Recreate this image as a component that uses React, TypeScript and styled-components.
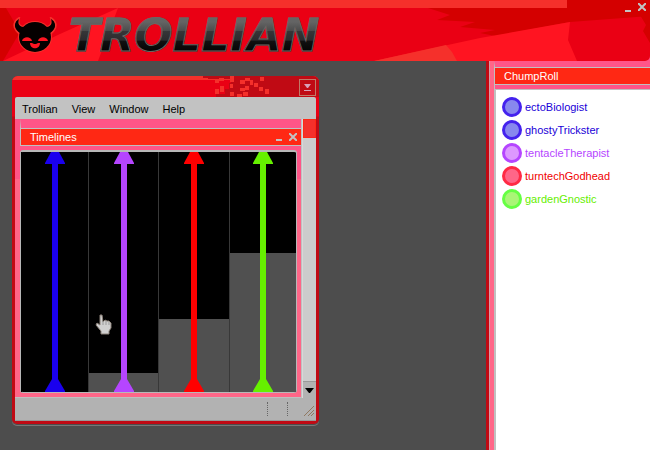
import React from "react";
import styled, { createGlobalStyle } from "styled-components";

const Global = createGlobalStyle`
  * { box-sizing: border-box; }
  body { margin: 0; background: #4d4d4d; font: 11px/16px "Liberation Sans", Arial, sans-serif; }
  button { font: inherit; color: inherit; background: none; border: 0; padding: 0; cursor: pointer; }
`;

const Page = styled.div`
  min-height: 100vh;
  display: flex;
  flex-direction: column;
  background: #4d4d4d;
`;

const Banner = styled.header`
  position: relative;
  display: flex;
  justify-content: space-between;
  align-items: flex-start;
  height: 61px;
  background: #ff5588;
`;

const BannerArt = styled.svg`
  position: absolute;
  inset: 0;
  width: 100%;
  height: 100%;
  border-radius: 0 0 5px 0;
`;

const Brand = styled.div`
  position: relative;
  display: flex;
  align-items: center;
  gap: 12px;
  padding: 9px 0 0 13px;
`;

const Wordmark = styled.h1`
  margin: 0;
  padding-right: 8px;
  font: italic bold 45px/54px "DejaVu Sans", Verdana, sans-serif;
  color: transparent;
  background: linear-gradient(#646464 24%, #4c4c4c 40%, #363638 41%, #2b2b2d 58%, #111 59%, #000 85%);
  background-clip: text;
  -webkit-background-clip: text;
  -webkit-text-stroke: 1px #6c6562;
`;

const Controls = styled.div`
  position: relative;
  display: flex;
  align-items: center;
  gap: 4px;
`;

const BannerControls = styled(Controls)`
  padding: 2px 3px 0 0;
`;

const IconButton = styled.button`
  display: grid;
  place-items: center;
  width: 10px;
  height: 10px;
`;

const Workspace = styled.div`
  flex: 1;
  display: grid;
  grid-template-columns: minmax(0, 1fr) 164px;
`;

const Desktop = styled.main`
  padding: 15px 12px;
`;

const Window = styled.section`
  display: flex;
  flex-direction: column;
  max-width: 307px;
  padding: 0 3px 3px;
  border-radius: 6px 6px 5px 5px;
  background: linear-gradient(#ea0014 40px, #c00a14 41px);
  box-shadow: 0 1px 0 #4d4d4d, 0 2px 0 #777;
`;

const WindowTitle = styled.header`
  position: relative;
  display: flex;
  justify-content: flex-end;
  align-items: center;
  height: 21px;
  margin: 0 -3px;
  padding: 1px 3px 0 0;
  border-radius: 6px 6px 0 0;
  overflow: hidden;
  background: linear-gradient(#f5302b 4px, #ea0014 4px);
`;

const TitleArt = styled.svg`
  position: absolute;
  top: 0;
  right: 0;
`;

const Collapse = styled.button`
  position: relative;
  display: grid;
  place-items: center;
  width: 17px;
  height: 17px;
  && { border: 1px solid #c07a68; }
`;

const MenuBar = styled.nav`
  display: flex;
  align-items: center;
  gap: 14px;
  height: 22px;
  padding: 2px 7px 0;
  border-radius: 2px 2px 0 0;
  background: #c2c2c2;
  color: #000;
`;

const Body = styled.div`
  display: grid;
  grid-template-columns: minmax(0, 1fr) 14px;
`;

const Pane = styled.section`
  min-width: 0;
  padding: 0 0 4px 5px;
  border-right: 1px solid #c0c0c0;
  border-bottom: 1px solid #c0c0c0;
  background: linear-gradient(#ff5588 60px, #ff6688 60px);
`;

const PaneTitle = styled.header`
  display: flex;
  justify-content: space-between;
  align-items: center;
  height: 27px;
  padding: 0 3px 0 9px;
  border: solid #c0c0c0;
  border-width: 1px 0 1px 1px;
  border-top: 9px solid #ff5588;
  box-shadow: inset 0 1px 0 #c0c0c0;
  background: #ff2814;
  color: #fff;
`;

const Heading = styled.h2`
  margin: 0;
  padding-top: 1px;
  font-size: 11px;
  font-weight: normal;
`;

const Chart = styled.div`
  display: grid;
  grid-template-columns: 67fr 70fr 70fr 67fr;
  height: 243px;
  margin: 4px 4px 0 0;
  border: solid #b8b8b8;
  border-width: 2px 1px 1px;
  border-radius: 3px;
  background: #000;
`;

const Lane = styled.div`
  display: grid;
  height: 240px;
  border-left: 1px solid #383838;
  &:first-child { border-left-color: #000; }
  > * { grid-area: 1 / 1; }
`;

const Level = styled.div`
  align-self: end;
  background: #505050;
`;

const Arrow = styled.div<{ $color: string }>`
  display: flex;
  flex-direction: column;
  align-items: center;
  color: ${(p) => p.$color};
  svg { display: block; fill: currentColor; }
`;

const Stem = styled.div`
  flex: 1;
  width: 6px;
  background: currentColor;
`;

const ScrollBar = styled.div`
  display: flex;
  flex-direction: column;
  border-left: 1px solid #d8d8d8;
  background: #cccccc;
`;

const Thumb = styled.div`
  height: 19px;
  border: 1px solid #ff2814;
  background: #f5302b;
`;

const ScrollDown = styled.button`
  display: grid;
  place-items: center;
  height: 17px;
  margin-top: auto;
  && { border-top: 1px solid #999; background: #b2b2b2; }
`;

const StatusBar = styled.footer`
  display: flex;
  justify-content: flex-end;
  align-items: center;
  gap: 15px;
  height: 23px;
  padding: 0 1px 0 0;
  border-bottom: 1px solid #999;
  background: #b2b2b2;
`;

const Cell = styled.span`
  width: 21px;
  height: 14px;
  border: dotted #666;
  border-width: 0 1px;
`;

const Grip = styled.svg`
  align-self: flex-end;
  margin-bottom: 3px;
`;

const Sidebar = styled.aside`
  display: flex;
  flex-direction: column;
  padding-left: 5px;
  border-left: 3px solid #c00a14;
  background: #ff6688;
  box-shadow: inset 1px 0 0 #d0a0a8;
`;

const RollTitle = styled(PaneTitle)`
  height: 24px;
  border-top-width: 6px;
`;

const Roll = styled.ul`
  flex: 1;
  display: flex;
  flex-direction: column;
  gap: 3px;
  margin: 0;
  padding: 7px 6px;
  list-style: none;
  border: solid #c0c0c0;
  border-width: 1px 0 0 2px;
  background: #fff;
`;

const RollGap = styled.div`
  height: 4px;
  border-left: 1px solid #c0c0c0;
  background: #ff5588;
`;

const Chum = styled.li<{ $text: string }>`
  display: flex;
  align-items: center;
  gap: 3px;
  height: 20px;
  color: ${(p) => p.$text};
`;

const Mood = styled.span<{ $ring: string; $fill: string }>`
  width: 20px;
  height: 20px;
  border: 3px solid ${(p) => p.$ring};
  border-radius: 50%;
  background: ${(p) => p.$fill};
`;

const chums = [
  { name: "ectoBiologist", text: "#1a00d8", ring: "#4422ee", fill: "#8888ee" },
  { name: "ghostyTrickster", text: "#1a00d8", ring: "#4422ee", fill: "#8888ee" },
  { name: "tentacleTherapist", text: "#b545ff", ring: "#b545ff", fill: "#dd99ff" },
  { name: "turntechGodhead", text: "#f00000", ring: "#ff2a44", fill: "#ff6688" },
  { name: "gardenGnostic", text: "#66ee00", ring: "#66ff44", fill: "#aaf577" },
];

const lanes = [
  { color: "#1a00ee", level: 0 },
  { color: "#b545ff", level: 8 },
  { color: "#ff0000", level: 30.5 },
  { color: "#66f000", level: 58 },
];

const pixels = [
  [16, 3, 4, 4], [20, 2, 5, 3], [31, 0, 4, 6], [41, 4, 5, 4], [46, 2, 5, 3], [51, 4, 3, 5], [61, 1, 4, 4],
  [16, 13, 4, 5], [21, 10, 4, 6], [31, 16, 4, 4], [31, 8, 3, 4], [41, 12, 5, 3], [46, 10, 4, 4], [44, 16, 5, 4],
  [55, 7, 4, 4], [60, 11, 4, 4], [66, 13, 4, 5], [38, 18, 5, 3],
];

const Minimize = () => (
  <svg width="6" height="9" viewBox="0 0 6 9"><path d="M0 7h6v2H0z" fill="#c2c2c2" /></svg>
);

const Close = () => (
  <svg width="8" height="8" viewBox="0 0 8 8"><path d="M0 0l8 8M8 0L0 8" stroke="#c2c2c2" strokeWidth="2" /></svg>
);

const Devil = () => (
  <svg width="44" height="38" viewBox="0 0 44 38" aria-hidden="true">
    <g stroke="#f5302b" strokeWidth="2" fill="#050000">
      <path id="horns" d="M6 1C1 4 0 9 3 13c1 2 3 3 5 5l6-8C7 11 4 7 6 1zM38 1c5 3 6 8 3 12-1 2-3 3-5 5l-6-8c7 1 10-3 8-9z" />
      <ellipse cx="22" cy="20" rx="16" ry="15" />
    </g>
    <path d="M6 2C2 4 1 9 3 12c1 2 3 3 5 5l8-7C7 11 4 8 6 2zM38 2c4 2 5 7 3 10-1 2-3 3-5 5l-8-7c9 1 12-2 10-8z" fill="#050000" />
    <ellipse cx="22" cy="20" rx="16" ry="15" fill="#050000" />
    <path d="M9 24c1-5 9-5 10 0zM25 24c1-5 9-5 10 0zM17 26h2l2 1h2l2-1h2c0 7-10 7-10 0z" fill="#ff1421" />
  </svg>
);

const Cursor = styled.svg`
  position: absolute;
  left: 75px;
  top: 164px;
`;

const ChartFrame = styled.div`
  position: relative;
`;

export default function App() {
  return (
    <Page>
      <Global />
      <Banner>
        <BannerArt viewBox="0 0 650 61" preserveAspectRatio="none" aria-hidden="true">
          <path d="M0 0h650v61H0z" fill="#ea0014" />
          <path d="M0 8h6l14 24L3 61H0z" fill="#d40000" />
          <path d="M118 8L98 61H3L60 34z" fill="#ff1421" />
          <path d="M428 8h222v8L570 22 495 36 480 33 495 30 460 27 475 22 437 20 450 15z" fill="#d40000" />
          <path d="M374 61L480 38 570 22 568 40 577 61z" fill="#ff1421" />
          <path d="M374 61L446 45 452 52 457 61z" fill="#f5302b" />
          <path d="M640 15h10v28l-7-12 3-6z" fill="#d40000" />
          <path d="M0 0h567v8H0z" fill="#f5302b" />
          <path d="M567 0h83v15H567z" fill="#d40000" />
        </BannerArt>
        <Brand>
          <Devil />
          <Wordmark>TROLLIAN</Wordmark>
        </Brand>
        <BannerControls>
          <IconButton aria-label="Minimize"><Minimize /></IconButton>
          <IconButton aria-label="Close"><Close /></IconButton>
        </BannerControls>
      </Banner>
      <Workspace>
        <Desktop>
          <Window aria-label="Trollian">
            <WindowTitle>
              <TitleArt width="120" height="21" viewBox="0 0 120 21" aria-hidden="true">
                <path d="M4 0h116v21H17v-5h-3v-3h12V7h6V3H9V2H4z" fill="#c00a14" />
                <path d="M9 4h12v3h9v6h-4v5h-9v3H9z" fill="#ea0014" />
                {pixels.map(([x, y, w, h]) => (
                  <rect key={`${x}-${y}`} x={x} y={y} width={w} height={h} fill="#f5302b" />
                ))}
              </TitleArt>
              <Collapse aria-label="Collapse">
                <svg width="7" height="7" viewBox="0 0 7 7"><path d="M0 0h7L4 4H3zM0 6h7v1H0z" fill="#d8a0b8" /></svg>
              </Collapse>
            </WindowTitle>
            <MenuBar>
              <button>Trollian</button>
              <button>View</button>
              <button>Window</button>
              <button>Help</button>
            </MenuBar>
            <Body>
              <Pane>
                <PaneTitle>
                  <Heading>Timelines</Heading>
                  <Controls>
                    <IconButton aria-label="Minimize timelines"><Minimize /></IconButton>
                    <IconButton aria-label="Close timelines"><Close /></IconButton>
                  </Controls>
                </PaneTitle>
                <ChartFrame>
                  <Chart>
                    {lanes.map((lane) => (
                      <Lane key={lane.color}>
                        <Level style={{ height: `${lane.level}%` }} />
                        <Arrow $color={lane.color}>
                          <svg width="20" height="12" viewBox="0 0 20 12"><path d="M6 0h8l6 11v1H0v-1z" /></svg>
                          <Stem />
                          <svg width="20" height="13" viewBox="0 0 20 13"><path d="M7 0h6l7 12v1H0v-1z" /></svg>
                        </Arrow>
                      </Lane>
                    ))}
                  </Chart>
                  <Cursor width="17" height="21" viewBox="0 0 17 21" aria-hidden="true">
                    <path d="M5 1h2l1 7 2-2 2 1 2 0 2 2v5l-2 3v3H6v-3L1 11l1-2 3 2z" fill="#d0d0d0" stroke="#8a8078" />
                    <path d="M8 7v4M11 7v4M14 8v3" stroke="#999" />
                  </Cursor>
                </ChartFrame>
              </Pane>
              <ScrollBar>
                <Thumb />
                <ScrollDown aria-label="Scroll down">
                  <svg width="9" height="5" viewBox="0 0 9 5"><path d="M0 0h9L5 5H4z" /></svg>
                </ScrollDown>
              </ScrollBar>
            </Body>
            <StatusBar>
              <Cell />
              <Grip width="12" height="12" viewBox="0 0 12 12" aria-hidden="true">
                <path d="M1 11L11 1M5 11l6-6M8 11l3-3" stroke="#907860" strokeWidth="1" />
              </Grip>
            </StatusBar>
          </Window>
        </Desktop>
        <Sidebar>
          <RollTitle><Heading>ChumpRoll</Heading></RollTitle>
          <RollGap />
          <Roll>
            {chums.map((c) => (
              <Chum key={c.name} $text={c.text}>
                <Mood $ring={c.ring} $fill={c.fill} />
                {c.name}
              </Chum>
            ))}
          </Roll>
        </Sidebar>
      </Workspace>
    </Page>
  );
}
